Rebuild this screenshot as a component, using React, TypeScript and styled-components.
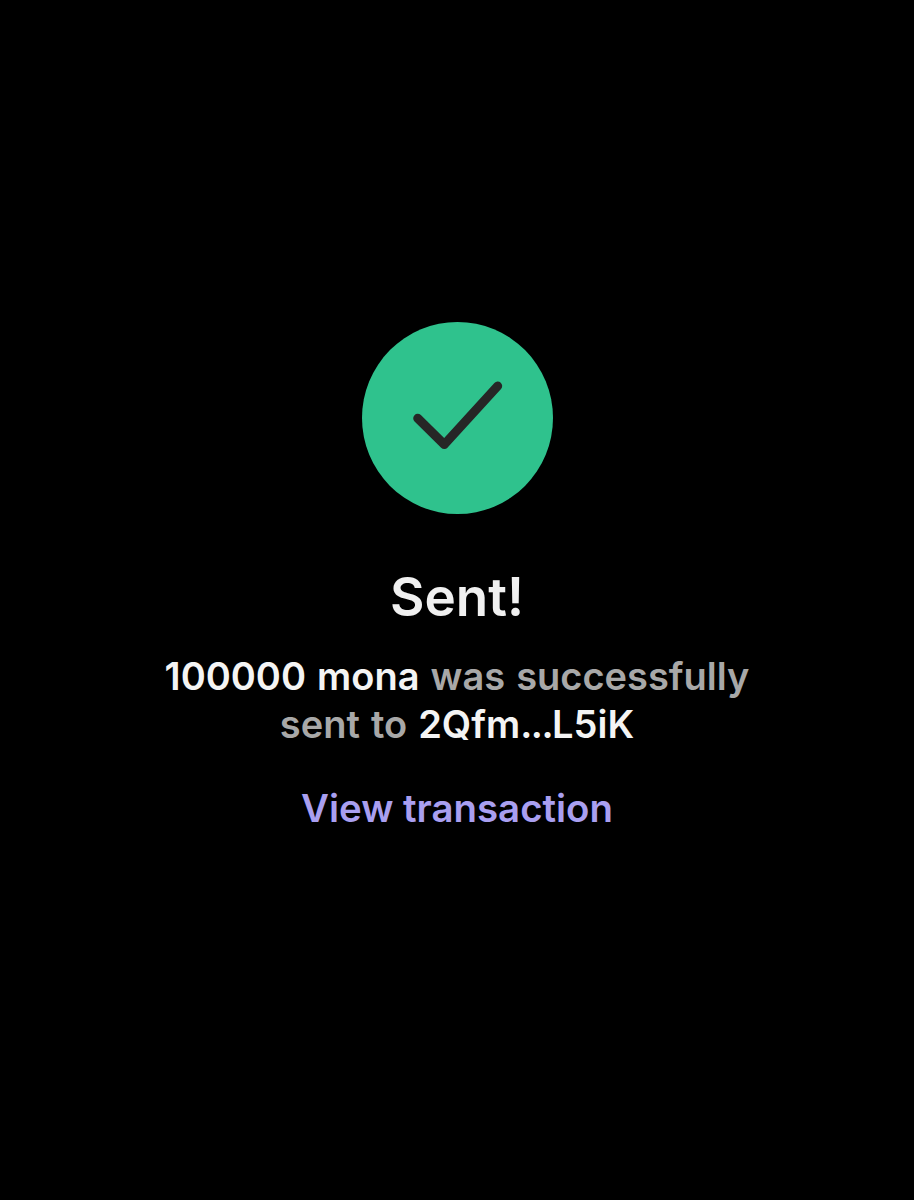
import * as React from 'react';
import styled, { createGlobalStyle } from 'styled-components';

const GlobalStyle = createGlobalStyle`
  html, body {
    margin: 0;
    background: #000;
  }
`;

const Screen = styled.div`
  width: 914px;
  height: 1200px;
  background: #000;
  display: flex;
  flex-direction: column;
  align-items: center;
  padding-top: 322px;
  box-sizing: border-box;
  font-family: Inter, 'Liberation Sans', sans-serif;
`;

const Badge = styled.div`
  width: 191px;
  height: 192px;
  margin-left: 1px;
  border-radius: 50%;
  background: #2fc28d;
`;

const Check = styled.svg`
  display: block;
`;

const Title = styled.h1`
  margin: 53px 0 0;
  font-size: 53px;
  line-height: 60px;
  font-weight: 600;
  color: #f0f0f0;
`;

const Message = styled.p`
  margin: 25px 0 0;
  font-size: 38px;
  line-height: 48px;
  font-weight: 600;
  word-spacing: 1.5px;
  color: #a8a8a8;
  text-align: center;
`;

const Strong = styled.span`
  color: #f4f4f4;
`;

const Dots = styled.span`
  letter-spacing: -1.5px;
`;

const TxLink = styled.a`
  margin-top: 36px;
  font-size: 38.4px;
  line-height: 48px;
  font-weight: 600;
  color: #a99ff0;
`;

export default function App() {
  return (
    <Screen>
      <GlobalStyle />
      <Badge>
        <Check width="191" height="192" viewBox="0 0 191 192" fill="none">
          <path d="M55.7 96.3 L82.3 122.5 L135.7 64" stroke="#262626" strokeWidth="9" strokeLinecap="round" strokeLinejoin="round" />
        </Check>
      </Badge>
      <Title>Sent!</Title>
      <Message>
        <Strong>100000 mona</Strong> was successfully
        <br />
        sent to <Strong>2Qfm<Dots>...</Dots>L5iK</Strong>
      </Message>
      <TxLink>View transaction</TxLink>
    </Screen>
  );
}
